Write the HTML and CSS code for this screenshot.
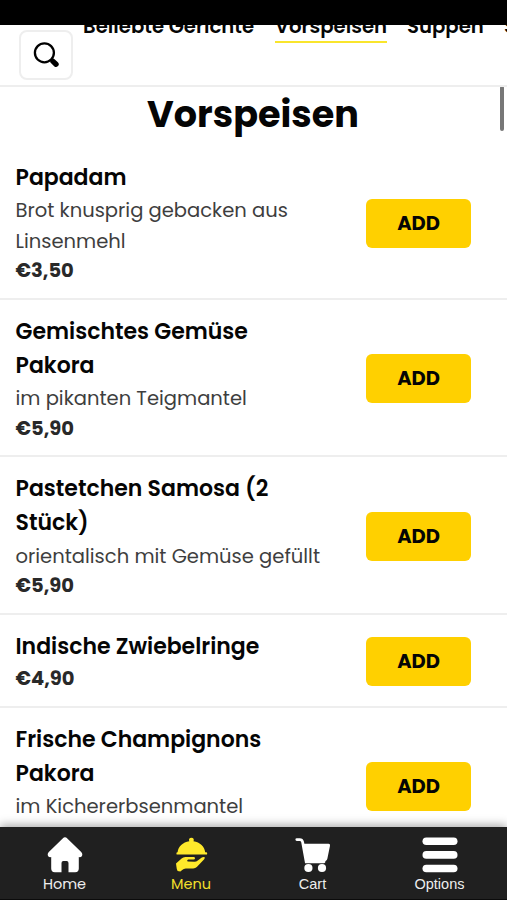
FILE: index.html
```html
<!DOCTYPE html>
<html lang="de">
<head>
<meta charset="utf-8">
<meta name="viewport" content="width=device-width, initial-scale=1">
<title>Vorspeisen</title>
<link rel="stylesheet" href="styles.css">
</head>
<body>
<div class="app">
  <div class="status-bar"></div>
  <header class="toolbar">
    <button class="search" aria-label="Suche">
      <svg width="26" height="26" viewBox="0 0 26 26"><circle cx="11.4" cy="10.8" r="9.5" fill="none" stroke="#000" stroke-width="2.3"/><path d="M17.6 17L19.3 18.7" stroke="#000" stroke-width="3"/><path d="M20 19.4L23 22.2" stroke="#000" stroke-width="5.4" stroke-linecap="round"/></svg>
    </button>
    <nav class="tabs">
      <a class="tab tab-popular">Beliebte Gerichte</a>
      <a class="tab tab-active">Vorspeisen</a>
      <a class="tab tab-soups">Suppen</a>
      <a class="tab">Salate</a>
    </nav>
  </header>
  <main class="menu">
    <div class="scrollbar"></div>
    <h1>Vorspeisen</h1>
    <article class="item">
      <div class="info"><h2>Papadam</h2><p>Brot knusprig gebacken aus<br>Linsenmehl</p><strong>€3,50</strong></div>
      <button class="add">ADD</button>
    </article>
    <article class="item">
      <div class="info"><h2>Gemischtes Gemüse<br>Pakora</h2><p>im pikanten Teigmantel</p><strong>€5,90</strong></div>
      <button class="add">ADD</button>
    </article>
    <article class="item">
      <div class="info"><h2>Pastetchen Samosa (2<br>Stück)</h2><p>orientalisch mit Gemüse gefüllt</p><strong>€5,90</strong></div>
      <button class="add">ADD</button>
    </article>
    <article class="item">
      <div class="info"><h2>Indische Zwiebelringe</h2><strong>€4,90</strong></div>
      <button class="add">ADD</button>
    </article>
    <article class="item">
      <div class="info"><h2>Frische Champignons<br>Pakora</h2><p>im Kichererbsenmantel</p><strong>€5,90</strong></div>
      <button class="add">ADD</button>
    </article>
  </main>
  <footer class="bottom-nav">
    <a class="nav-item">
      <svg width="36" height="36" viewBox="0 0 36 36" fill="#fff"><path d="M15.7 1.4Q18-.7 20.3 1.4L34.2 15Q36.2 17.5 34.6 19.4Q33.4 20.5 31.8 20V31.5Q31.8 35.2 28.2 35.2H21.5V26Q21.5 24 19.6 24H16.4Q14.5 24 14.5 26V35.2H7.8Q4.2 35.2 4.2 31.5V20Q2.6 20.5 1.4 19.4Q-.2 17.5 1.8 15Z"/></svg>
      <span>Home</span>
    </a>
    <a class="nav-item nav-active">
      <svg width="36" height="36" viewBox="0 0 36 36" fill="#ffe92b"><path d="M16.3 4.2C15.4 2.4 16.4.7 18.4.7s3 1.7 2.1 3.5C27 5.2 31.6 9.6 32.2 15.2H33.2Q34.2 15.2 34.2 16.4T33.2 17.6H4.4Q3.4 17.6 3.4 16.4T4.4 15.2H4.6C5.2 9.6 9.8 5.2 16.3 4.2Z"/><path d="M3 26.4L8.6 21.6Q10.2 20 12.4 20H20.6Q22 20 22 21.3T20.6 22.6H15.2Q13.4 23.2 14.6 24.4L21.4 24.7Q23.4 24.7 24.8 23.4L28.8 20.6Q30.4 19.6 32 20.4L31.2 22.2L23.8 30Q22.4 31.4 20.2 31.4H12.8Q10.6 31.5 9.2 33L7.4 34.6L4.6 34Q3.6 32 3.4 29.4Z"/></svg>
      <span>Menu</span>
    </a>
    <a class="nav-item nav-cart">
      <svg width="36" height="36" viewBox="0 0 36 36" fill="#fff"><path d="M1.8 2.6H4.8Q7 2.6 7.6 5L11.2 24.8H29" fill="none" stroke="#fff" stroke-width="2.8" stroke-linecap="round"/><path d="M8 6.8H33.6Q35.4 7 35 8.8L32.4 21.6Q31.8 24.4 29 24.4H11.6Z"/><circle cx="13.4" cy="31" r="4.1"/><circle cx="27" cy="31" r="4.1"/></svg>
      <span>Cart</span>
    </a>
    <a class="nav-item nav-options">
      <svg width="36" height="36" viewBox="0 0 36 36" fill="#fff"><rect x=".5" y=".5" width="35" height="7.6" rx="3.8"/><rect x=".5" y="14.1" width="35" height="7.6" rx="3.8"/><rect x=".5" y="27.7" width="35" height="7.6" rx="3.8"/></svg>
      <span>Options</span>
    </a>
  </footer>
</div>
</body>
</html>
```
FILE: styles.css
```css
* { box-sizing: border-box; margin: 0; padding: 0; }
body { background: #fff; color: #050505; font-family: Poppins, Inter, sans-serif; }
button { border: 0; font: inherit; color: inherit; }
.app { width: 507px; height: 900px; overflow: hidden; display: flex; flex-direction: column; }
.status-bar { flex: none; height: 25px; background: #000; }
.toolbar { flex: none; height: 62px; padding: 5px 0 0 19px; display: flex; gap: 10px; border-bottom: 2px solid #eee; overflow: hidden; }
.search { flex: none; width: 54px; height: 50px; background: #fff; border: 2px solid #eee; border-radius: 8px; display: grid; place-items: center; }
.tabs { display: flex; gap: 20px; height: 32px; margin-top: -19px; white-space: nowrap; }
.tab { flex: none; height: 32px; line-height: 30px; font-size: 19.7px; font-weight: 600; border-bottom: 2px solid transparent; }
.tab-popular { width: 172px; }
.tab-active { width: 112px; border-bottom-color: #f9e52c; }
.tab-soups { width: 77px; }
.menu { position: relative; flex: 1; min-height: 0; overflow: hidden; }
.scrollbar { position: absolute; right: 3px; top: -1px; width: 4px; height: 45px; border-radius: 2px; background: #777; }
h1 { height: 59px; padding-right: 1px; line-height: 55px; font-size: 36.6px; font-weight: 700; text-align: center; }
.item { display: flex; justify-content: space-between; align-items: center; padding: 14.9px 36px 11.3px 15.5px; border-bottom: 2px solid #eee; }
.info { white-space: nowrap; }
h2 { font-size: 22px; line-height: 34.3px; font-weight: 600; }
p { font-size: 19.55px; line-height: 30.4px; color: #3e3e3e; }
strong { display: block; font-size: 19.5px; line-height: 30.4px; font-weight: 700; color: #292929; }
.add { flex: none; width: 105px; height: 49px; margin-top: -1px; border-radius: 6px; background: #ffd000; font-size: 19.5px; font-weight: 700; }
.bottom-nav { position: relative; flex: none; height: 73px; padding: 10px 0 0 1px; display: grid; grid-template-columns: 127px 126px 117px 137px; background: #202020; color: #eee; box-shadow: 0 -2px 9px rgba(0,0,0,.35); border-bottom: 1px solid #0b0b0b; }
.nav-item { display: flex; flex-direction: column; align-items: center; font-size: 14.5px; line-height: 22px; }
.nav-item svg { flex: none; display: block; }
.nav-active { color: #f1df2b; }
.nav-cart, .nav-options { font-family: "Liberation Sans", Arial, sans-serif; }
```
